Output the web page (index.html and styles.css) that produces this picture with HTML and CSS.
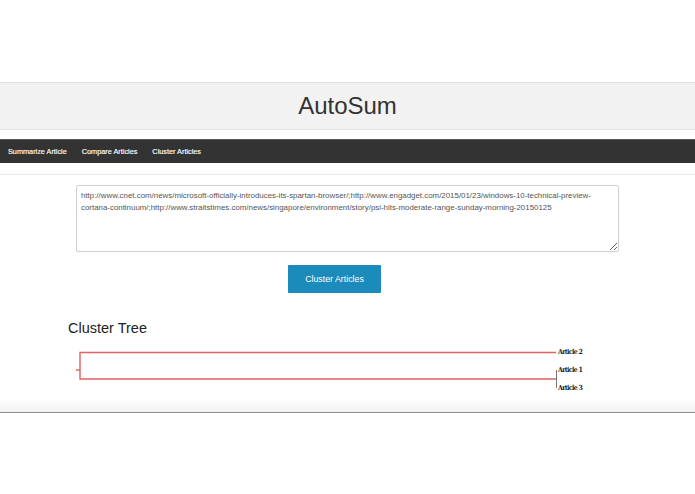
FILE: index.html
```html
<!DOCTYPE html>
<html>
<head>
<meta charset="utf-8">
<link rel="stylesheet" href="styles.css">
</head>
<body>
<div class="frame">
  <header class="jumbo"><h1>AutoSum</h1></header>
  <nav class="navbar">
    <a>Summarize Article</a>
    <a>Compare Articles</a>
    <a>Cluster Articles</a>
  </nav>
  <hr class="rule">
  <main class="content">
    <textarea class="urls" spellcheck="false">http://www.cnet.com/news/microsoft-officially-introduces-its-spartan-browser/;http://www.engadget.com/2015/01/23/windows-10-technical-preview-cortana-continuum/;http://www.straitstimes.com/news/singapore/environment/story/psi-hits-moderate-range-sunday-morning-20150125</textarea>
    <div class="actions"><button class="btn">Cluster Articles</button></div>
    <h2 class="tree-title">Cluster Tree</h2>
    <svg class="tree" width="695" height="50" viewBox="0 345 695 50">
      <g fill="none" stroke="#e06262" stroke-width="1.4">
        <path d="M76 370 H80"/>
        <path d="M556 352.5 H80 V379 H556"/>
      </g>
      <path d="M556.5 370 V388" stroke="#555" stroke-width="0.8" fill="none"/>
      <g class="lbl">
        <text x="558" y="353.5" textLength="25">Article 2</text>
        <text x="558" y="371.5" textLength="25">Article 1</text>
        <text x="558" y="389.5" textLength="25">Article 3</text>
      </g>
    </svg>
  </main>
  <div class="shade"></div>
</div>
</body>
</html>
```
FILE: styles.css
```css
html, body { margin: 0; padding: 0; background: #fff; }
body { font-family: "Liberation Sans", Arial, sans-serif; color: #333; }
.frame {
  position: relative;
  height: 413px;
  padding-top: 82px;
  box-sizing: border-box;
  border-bottom: 1px solid #8a8a8a;
  overflow: hidden;
}
.jumbo {
  height: 46px;
  background: #f2f2f2;
  border-top: 1px solid #e2e2e2;
  border-bottom: 1px solid #e2e2e2;
  display: flex;
  align-items: center;
  justify-content: center;
}
.jumbo h1 {
  margin: 0;
  font-weight: normal;
  font-size: 24px;
  color: #333;
  line-height: 1;
}
.navbar {
  margin-top: 9px;
  height: 24px;
  background: #333;
  border-top: 1px solid #5a5a5a;
  box-sizing: border-box;
  display: flex;
  align-items: center;
  padding-left: 8px;
  gap: 15px;
}
.navbar a {
  color: #fff;
  font-size: 7.3px;
  -webkit-text-stroke: 0.15px #fff;
}
.rule {
  margin: 11px 0 0 0;
  border: 0;
  border-top: 1px solid #e9e9e9;
  height: 0;
}
.content { padding: 0; }
.urls {
  display: block;
  margin: 10px 0 0 76px;
  width: 543px;
  height: 67px;
  box-sizing: border-box;
  border: 1px solid #d0d0d0;
  border-radius: 2px;
  padding: 4px 4px;
  font-family: "Liberation Sans", Arial, sans-serif;
  font-size: 7.9px;
  line-height: 12px;
  color: #555;
  resize: vertical;
  overflow: hidden;
  outline: none;
}
.actions { margin-top: 13px; padding-left: 288px; }
.btn {
  width: 93px;
  height: 28px;
  background: #1a8bbb;
  border: 0;
  border-radius: 1px;
  color: #fff;
  font-family: "Liberation Sans", Arial, sans-serif;
  font-size: 8.8px;
  padding: 0;
}
.tree-title {
  margin: 27px 0 0 68px;
  font-weight: normal;
  font-size: 14.5px;
  line-height: 16px;
  color: #222;
}
.tree { display: block; margin-top: 9px; }
.lbl text {
  font-family: "DejaVu Serif Condensed", "DejaVu Serif", serif;
  font-weight: bold;
  font-size: 7px;
  fill: #222;
}
.shade {
  position: absolute;
  left: 0; right: 0; bottom: 0;
  height: 14px;
  background: linear-gradient(to bottom, rgba(0,0,0,0), rgba(0,0,0,0.05));
}
```
